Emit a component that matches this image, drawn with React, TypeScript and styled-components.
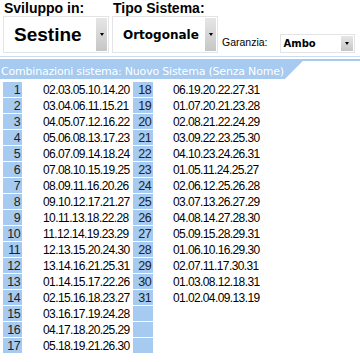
import React from 'react';
import styled, { createGlobalStyle } from 'styled-components';

const GlobalStyle = createGlobalStyle`
  html, body { margin: 0; padding: 0; background: #ffffff; }
  body { font-family: "Liberation Sans", Arial, sans-serif; color: #000; }
`;

const BLUE = '#a6caf0';

const Page = styled.div`
  width: 360px;
  height: 362px;
  overflow: hidden;
  background: #fff;
`;

const Toolbar = styled.div`
  display: flex;
  align-items: flex-end;
  padding-left: 3px;
  height: 53px;
`;

const Field = styled.div`
  display: flex;
  flex-direction: column;
  margin-right: 3px;
`;

const FieldLabel = styled.div`
  font: bold 14px/15px "Liberation Sans", Arial, sans-serif;
  padding: 1px 0 0 1px;
  height: 15px;
  white-space: nowrap;
`;

const SelectBox = styled.div<{ $w: number; $h: number; $pad: number }>`
  box-sizing: border-box;
  display: flex;
  align-items: center;
  width: ${(p) => p.$w}px;
  height: ${(p) => p.$h}px;
  border: 1px solid #e4e4e4;
  background: #fff;
  padding: 1px 1px 1px ${(p) => p.$pad}px;
`;

const SelectValue = styled.span<{ $kind: 'big' | 'mid' | 'small' }>`
  flex: 1;
  white-space: nowrap;
  color: #000;
  font-weight: bold;
  font-family: ${(p) =>
    p.$kind === 'big' ? '"Liberation Sans", Arial, sans-serif' : '"DejaVu Sans", Verdana, sans-serif'};
  font-size: ${(p) => (p.$kind === 'big' ? 19 : p.$kind === 'mid' ? 12 : 10)}px;
  line-height: 1;
`;

const DropButton = styled.div<{ $w: number }>`
  align-self: stretch;
  width: ${(p) => p.$w}px;
  flex: none;
  background: linear-gradient(to bottom, #e6e6e6 0%, #d6d6d6 50%, #c6c6c6 100%);
  display: flex;
  align-items: center;
  justify-content: center;
  &::after {
    content: '';
    width: 0;
    height: 0;
    border-left: 2.5px solid transparent;
    border-right: 2.5px solid transparent;
    border-top: 3px solid #000;
  }
`;

const InlineField = styled.div`
  display: flex;
  align-items: flex-end;
  margin-left: 1px;
`;

const InlineLabel = styled.span`
  font: 10.5px/12px "Liberation Sans", Arial, sans-serif;
  margin: 0 12px 5px 0;
  white-space: nowrap;
`;

const HeaderRule = styled.div`
  margin-top: 3px;
  border-top: 1px solid #c9dcf3;
  padding-top: 2px;
`;

const TabLine = styled.div`
  border-top: 2px solid ${BLUE};
`;

const Tab = styled.div`
  display: inline-block;
  box-sizing: border-box;
  height: 18px;
  padding: 3px 19px 0 1px;
  background: ${BLUE};
  color: #fff;
  font: 11px/16px "DejaVu Sans", Verdana, sans-serif;
  letter-spacing: -0.2px;
  white-space: nowrap;
  clip-path: polygon(0 0, 100% 0, calc(100% - 18px) 100%, 0 100%);
`;

const Table = styled.div`
  display: grid;
  grid-template-columns: 19px 111px 20px 1fr;
  grid-auto-rows: 15px;
  row-gap: 1px;
  margin: 3px 0 0 3px;
`;

const NumCell = styled.div`
  background: ${BLUE};
  color: #222;
  text-align: right;
  padding: 1px 2px 0 0;
  box-sizing: border-box;
  font: 12.5px/15px "Liberation Sans", Arial, sans-serif;
  letter-spacing: -0.6px;
`;

const ComboCell = styled.div<{ $pad: number }>`
  padding: 1px 0 0 ${(p) => p.$pad}px;
  box-sizing: border-box;
  color: #000;
  white-space: nowrap;
  font: 12px/15px "Liberation Sans", Arial, sans-serif;
  letter-spacing: -0.6px;
`;

const left = [
  '02.03.05.10.14.20',
  '03.04.06.11.15.21',
  '04.05.07.12.16.22',
  '05.06.08.13.17.23',
  '06.07.09.14.18.24',
  '07.08.10.15.19.25',
  '08.09.11.16.20.26',
  '09.10.12.17.21.27',
  '10.11.13.18.22.28',
  '11.12.14.19.23.29',
  '12.13.15.20.24.30',
  '13.14.16.21.25.31',
  '01.14.15.17.22.26',
  '02.15.16.18.23.27',
  '03.16.17.19.24.28',
  '04.17.18.20.25.29',
  '05.18.19.21.26.30',
];

const right = [
  '06.19.20.22.27.31',
  '01.07.20.21.23.28',
  '02.08.21.22.24.29',
  '03.09.22.23.25.30',
  '04.10.23.24.26.31',
  '01.05.11.24.25.27',
  '02.06.12.25.26.28',
  '03.07.13.26.27.29',
  '04.08.14.27.28.30',
  '05.09.15.28.29.31',
  '01.06.10.16.29.30',
  '02.07.11.17.30.31',
  '01.03.08.12.18.31',
  '01.02.04.09.13.19',
];

export default function App() {
  return (
    <Page>
      <GlobalStyle />
      <Toolbar>
        <Field>
          <FieldLabel>Sviluppo in:</FieldLabel>
          <SelectBox $w={106} $h={37} $pad={10}>
            <SelectValue $kind="big">Sestine</SelectValue>
            <DropButton $w={11} />
          </SelectBox>
        </Field>
        <Field>
          <FieldLabel>Tipo Sistema:</FieldLabel>
          <SelectBox $w={106} $h={37} $pad={10}>
            <SelectValue $kind="mid">Ortogonale</SelectValue>
            <DropButton $w={11} />
          </SelectBox>
        </Field>
        <InlineField>
          <InlineLabel>Garanzia:</InlineLabel>
          <SelectBox $w={75} $h={19} $pad={3}>
            <SelectValue $kind="small">Ambo</SelectValue>
            <DropButton $w={12} />
          </SelectBox>
        </InlineField>
      </Toolbar>
      <HeaderRule>
        <TabLine>
          <Tab>Combinazioni sistema: Nuovo Sistema (Senza Nome)</Tab>
        </TabLine>
      </HeaderRule>
      <Table>
        {left.map((combo, i) => (
          <React.Fragment key={i}>
            <NumCell>{i + 1}</NumCell>
            <ComboCell $pad={21}>{combo}</ComboCell>
            <NumCell>{i < right.length ? i + 18 : ''}</NumCell>
            <ComboCell $pad={20}>{right[i] ?? ''}</ComboCell>
          </React.Fragment>
        ))}
      </Table>
    </Page>
  );
}
